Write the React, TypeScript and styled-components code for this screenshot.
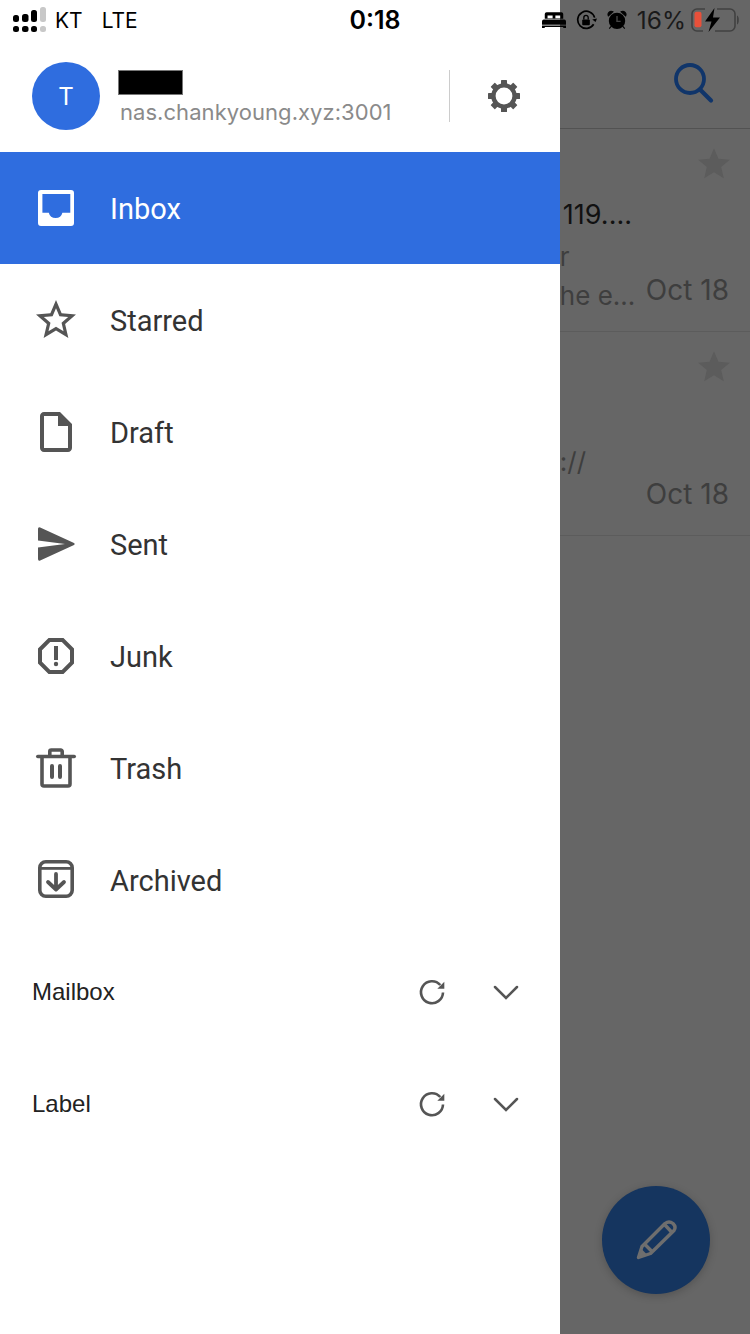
import React from 'react';
import styled, { createGlobalStyle } from 'styled-components';

const GlobalStyle = createGlobalStyle`
  html, body {
    margin: 0;
    padding: 0;
    background: #666;
    font-family: Inter, "Liberation Sans", sans-serif;
  }
  * {
    box-sizing: border-box;
  }
`;

const menuItems = [
  { label: 'Inbox', icon: 'inbox' },
  { label: 'Starred', icon: 'star' },
  { label: 'Draft', icon: 'draft' },
  { label: 'Sent', icon: 'sent' },
  { label: 'Junk', icon: 'junk' },
  { label: 'Trash', icon: 'trash' },
  { label: 'Archived', icon: 'archive' },
];

const MenuIcon = ({ name }: { name: string }) => {
  switch (name) {
    case 'inbox':
      return (
        <svg width="48" height="48" viewBox="0 0 48 48" fill="currentColor">
          <path
            fillRule="evenodd"
            d="M9 6h30a3 3 0 0 1 3 3v30a3 3 0 0 1-3 3H9a3 3 0 0 1-3-3V9a3 3 0 0 1 3-3zM10.4 10v18.7h6.4a7 7 0 0 0 13.6 0h7.9V10z"
          />
        </svg>
      );
    case 'star':
      return (
        <svg width="48" height="48" viewBox="0 0 24 24" fill="currentColor">
          <path d="M22 9.24l-7.19-.62L12 2 9.19 8.63 2 9.24l5.46 4.73L5.82 21 12 17.27 18.18 21l-1.63-7.03L22 9.24zM12 15.4l-3.76 2.27 1-4.28-3.32-2.88 4.38-.38L12 6.1l1.71 4.04 4.38.38-3.32 2.88 1 4.28L12 15.4z" />
        </svg>
      );
    case 'draft':
      return (
        <svg width="48" height="48" viewBox="0 0 24 24" fill="currentColor">
          <path d="M14 2H6c-1.1 0-2 .9-2 2v16c0 1.1.9 2 2 2h12c1.1 0 2-.9 2-2V8l-6-6zm4 18H6V4h7v5h5v11z" />
        </svg>
      );
    case 'sent':
      return (
        <svg width="48" height="48" viewBox="0 0 48 48" fill="currentColor">
          <path d="M8.2 7.4L42 23a1.1 1.1 0 0 1 0 2L8.2 40.6Q6 41.4 6 39V27.6L33 24 6 20.4V9Q6 6.6 8.2 7.4z" />
        </svg>
      );
    case 'junk':
      return (
        <svg width="48" height="48" viewBox="0 0 24 24" fill="currentColor">
          <path d="M15.73 3H8.27L3 8.27v7.46L8.27 21h7.46L21 15.73V8.27L15.73 3zM19 14.9L14.9 19H9.1L5 14.9V9.1L9.1 5h5.8L19 9.1v5.8z" />
          <circle cx="12" cy="16" r="1.1" />
          <path d="M11 7h2v7h-2z" />
        </svg>
      );
    case 'trash':
      return (
        <svg width="48" height="48" viewBox="0 0 48 48" fill="none" stroke="currentColor" strokeWidth="3.6">
          <path d="M5.8 12.5h36.4" strokeLinecap="round" />
          <path d="M10 12.5V40a2 2 0 0 0 2 2h24a2 2 0 0 0 2-2V12.5" />
          <path d="M17.8 12V7.5a1.5 1.5 0 0 1 1.5-1.5h9.4a1.5 1.5 0 0 1 1.5 1.5V12" />
          <path d="M20 22v11M28 22v11" strokeWidth="4" strokeLinecap="round" />
        </svg>
      );
    default:
      return (
        <svg width="48" height="48" viewBox="0 0 48 48" fill="none" stroke="currentColor" strokeWidth="3.6">
          <rect x="7.8" y="5.8" width="32.4" height="34.4" rx="6" />
          <path d="M8 12.4h32" strokeWidth="2.8" />
          <path d="M24 18v15M16 26l8 7.5 8-7.5" strokeWidth="3.8" strokeLinecap="round" strokeLinejoin="round" />
        </svg>
      );
  }
};

const GearIcon = () => (
  <svg width="36" height="36" viewBox="0 0 36 36" fill="#555">
    <circle cx="18" cy="18" r="10.6" fill="none" stroke="#555" strokeWidth="4.4" />
    {[0, 45, 90, 135, 180, 225, 270, 315].map((angle) => (
      <rect key={angle} x="15" y="2" width="6" height="6" rx="0.6" transform={`rotate(${angle} 18 18)`} />
    ))}
  </svg>
);

const RefreshIcon = () => (
  <svg width="32" height="32" viewBox="0 0 32 32" fill="none">
    <path d="M24.3 9A11 11 0 1 0 27 16.5" stroke="#555" strokeWidth="2.6" />
    <path d="M28.3 5.7v7h-7z" fill="#555" />
  </svg>
);

const ChevronIcon = () => (
  <svg width="32" height="32" viewBox="0 0 32 32" fill="none">
    <path d="M5 11l11 11 11-11" stroke="#555" strokeWidth="2.5" strokeLinecap="round" />
  </svg>
);

const SearchIcon = () => (
  <svg width="44" height="44" viewBox="0 0 44 44" fill="none" stroke="#10356a" strokeWidth="3.8">
    <circle cx="18" cy="19" r="14" />
    <path d="M28.5 30L39 40.5" strokeLinecap="round" strokeWidth="4.2" />
  </svg>
);

const StarIcon = () => (
  <svg width="38" height="38" viewBox="0 0 24 24" fill="#5c5c5c">
    <path d="M12 17.27L18.18 21l-1.64-7.03L22 9.24l-7.19-.61L12 2 9.19 8.63 2 9.24l5.46 4.73L5.82 21z" />
  </svg>
);

const PencilIcon = () => (
  <svg width="48" height="48" viewBox="0 0 48 48" fill="none" stroke="#6e6e6e" strokeWidth="3.4" strokeLinejoin="round">
    <path d="M6.5 41.5L10 30.5 33 7.5Q37 4.5 41 7.5 44.5 11 42 14.5L18.5 37.5z" />
    <path d="M12.5 28l8 8M33 9l7 7.5" />
    <path d="M6.5 41.5L9.5 33l5.5 5.5z" fill="#6e6e6e" stroke="none" />
  </svg>
);

const SignalIcon = () => (
  <svg width="34" height="28" viewBox="0 0 34 28">
    <rect x="0" y="9" width="6" height="7" rx="2.5" fill="#000" />
    <rect x="0" y="20" width="6" height="6" rx="2.5" fill="#000" />
    <rect x="9" y="8" width="6.5" height="8" rx="2.5" fill="#000" />
    <rect x="9" y="20" width="6.5" height="6" rx="2.5" fill="#000" />
    <rect x="18" y="4" width="6" height="12" rx="2.5" fill="#000" />
    <rect x="18" y="20" width="6" height="6" rx="2.5" fill="#000" />
    <rect x="27" y="1" width="6" height="15" rx="2.5" fill="#c8c8c8" />
    <rect x="27" y="20" width="6" height="6" rx="2.5" fill="#c8c8c8" />
  </svg>
);

const BedIcon = () => (
  <svg width="24" height="17" viewBox="0 0 26 18" fill="#000">
    <path
      fillRule="evenodd"
      d="M5 0h16a2 2 0 0 1 2 2v5H3V2a2 2 0 0 1 2-2zM6 3.5v3h5.5v-3zM14.5 3.5v3H20v-3z"
    />
    <path d="M2 8h22a2 2 0 0 1 2 2v3.5H0V10a2 2 0 0 1 2-2zM0 14.5h26V17h-3v-1H3v1H0z" />
  </svg>
);

const RotationLockIcon = () => (
  <svg width="21" height="21" viewBox="0 0 22 22" fill="none">
    <path d="M18.5 15A9 9 0 1 1 19.5 8" stroke="#000" strokeWidth="1.8" />
    <path d="M17 10l3.5 2.5L22 9z" fill="#000" />
    <rect x="6.5" y="10" width="8" height="6" rx="1" fill="#000" />
    <path d="M8.2 10V8a2.3 2.3 0 0 1 4.6 0v2" stroke="#000" strokeWidth="1.4" />
  </svg>
);

const AlarmIcon = () => (
  <svg width="20" height="20" viewBox="0 0 22 22" fill="#000">
    <circle cx="11" cy="12" r="9" />
    <path d="M1.5 6.5a3.5 3.5 0 0 1 5-4.5zM20.5 6.500a3.5 3.5 0 0 0-5-4.5zM4.5 18l-2 2.5M17.500 18l2 2.5" stroke="#000" strokeWidth="1.2" />
    <path d="M11 6.5V12.5H15" stroke="#444" strokeWidth="1.6" fill="none" />
  </svg>
);

const BatteryIcon = () => (
  <svg width="48" height="24" viewBox="0 0 48 24" fill="none">
    <path d="M14 1H6a5 5 0 0 0-5 5v12a5 5 0 0 0 5 5h6M26 1h13a5 5 0 0 1 5 5v12a5 5 0 0 1-5 5H24" stroke="#414141" strokeWidth="1.6" />
    <rect x="3.5" y="3.8" width="7" height="15.5" rx="2" fill="#e8503a" />
    <path d="M46 7.5c1.2.6 1.8 2 1.8 4.5s-.6 3.9-1.8 4.5z" fill="#414141" />
    <path d="M23.5 0L14 13.5h6.5L17.5 24 29 9.5h-7z" fill="#000" />
  </svg>
);

export default function App() {
  return (
    <>
      <GlobalStyle />
      <Screen>
        <Drawer>
          <DrawerHeader>
            <Avatar>T</Avatar>
            <AccountInfo>
              <RedactedName />
              <ServerUrl>nas.chankyoung.xyz:3001</ServerUrl>
            </AccountInfo>
            <HeaderDivider />
            <SettingsButton>
              <GearIcon />
            </SettingsButton>
          </DrawerHeader>

          {menuItems.map((item, i) => (
            <MenuItem key={item.label} $active={i === 0}>
              <IconSlot>
                <MenuIcon name={item.icon} />
              </IconSlot>
              <MenuLabel $active={i === 0}>{item.label}</MenuLabel>
            </MenuItem>
          ))}

          {['Mailbox', 'Label'].map((title) => (
            <SectionRow key={title}>
              <SectionTitle>{title}</SectionTitle>
              <SectionActions>
                <RefreshIcon />
                <ChevronIcon />
              </SectionActions>
            </SectionRow>
          ))}
        </Drawer>

        <Backdrop>
          <ListHeader>
            <SearchIcon />
          </ListHeader>
          <MailRow>
            <MailText>
              <Subject>119....</Subject>
              <Preview $top={9}>r</Preview>
              <Preview $top={7}>he e...</Preview>
            </MailText>
            <MailMeta>
              <StarIcon />
              <MailDate>Oct 18</MailDate>
            </MailMeta>
          </MailRow>
          <MailRow>
            <MailText>
              <Subject />
              <Preview $top={11}>://</Preview>
            </MailText>
            <MailMeta>
              <StarIcon />
              <MailDate>Oct 18</MailDate>
            </MailMeta>
          </MailRow>
        </Backdrop>

        <StatusBar>
          <StatusLeft>
            <SignalIcon />
            <Carrier>KT</Carrier>
            <Carrier>LTE</Carrier>
          </StatusLeft>
          <StatusTime>0:18</StatusTime>
          <StatusRight>
            <BedIcon />
            <RotationLockIcon />
            <AlarmIcon />
            <BatteryText>16%</BatteryText>
            <BatteryIcon />
          </StatusRight>
        </StatusBar>

        <ComposeButton>
          <PencilIcon />
        </ComposeButton>
      </Screen>
    </>
  );
}

const Screen = styled.div`
  position: relative;
  display: flex;
  width: 750px;
  height: 1334px;
  overflow: hidden;
`;

const Drawer = styled.div`
  display: flex;
  flex-direction: column;
  flex: 0 0 560px;
  background: #fff;
`;

const DrawerHeader = styled.div`
  display: flex;
  align-items: center;
  height: 152px;
  padding: 40px 2px 0 32px;
`;

const Avatar = styled.div`
  display: flex;
  align-items: center;
  justify-content: center;
  flex: 0 0 68px;
  height: 68px;
  border-radius: 50%;
  background: #2f6ddf;
  color: #fff;
  font-family: Inter, sans-serif;
  font-size: 24px;
`;

const AccountInfo = styled.div`
  display: flex;
  flex: 1;
  flex-direction: column;
  align-items: flex-start;
  padding: 4px 0 0 18px;
`;

const RedactedName = styled.div`
  width: 65px;
  height: 25px;
  background: #000;
  border: 1px solid #777;
`;

const ServerUrl = styled.div`
  margin: 2px 0 0 2px;
  color: #8a8a8a;
  font-family: Inter, sans-serif;
  font-size: 22px;
  letter-spacing: 0.05px;
  line-height: 30px;
  white-space: nowrap;
`;

const HeaderDivider = styled.div`
  flex: 0 0 1px;
  height: 52px;
  background: #ccc;
`;

const SettingsButton = styled.div`
  display: flex;
  align-items: center;
  justify-content: center;
  flex: 0 0 108px;
`;

const MenuItem = styled.div<{ $active: boolean }>`
  display: flex;
  align-items: center;
  height: 112px;
  padding-left: 32px;
  background: ${(props) => (props.$active ? '#2f6ddf' : 'transparent')};
  color: ${(props) => (props.$active ? '#fff' : '#555')};
`;

const IconSlot = styled.div`
  display: flex;
  flex: 0 0 48px;
  height: 48px;
  margin-right: 30px;
`;

const MenuLabel = styled.span<{ $active: boolean }>`
  padding-top: 2px;
  color: ${(props) => (props.$active ? '#fff' : '#333')};
  font-family: Roboto, sans-serif;
  font-size: 29px;
`;

const SectionRow = styled.div`
  display: flex;
  align-items: center;
  justify-content: space-between;
  height: 112px;
  padding: 0 38px 0 32px;
`;

const SectionTitle = styled.span`
  color: #222;
  font-family: "Liberation Sans", sans-serif;
  font-size: 24px;
`;

const SectionActions = styled.div`
  display: flex;
  align-items: center;
  gap: 42px;
`;

const Backdrop = styled.div`
  display: flex;
  flex: 1;
  flex-direction: column;
  min-width: 0;
  background: #666;
  overflow: hidden;
`;

const ListHeader = styled.div`
  display: flex;
  align-items: flex-start;
  justify-content: flex-end;
  height: 128.7px;
  padding: 60px 34px 0 0;
  border-bottom: 1px solid #525252;
`;

const MailRow = styled.div`
  display: flex;
  justify-content: flex-end;
  height: 203.5px;
  padding: 16px 21px 25px 0;
  border-bottom: 1px solid #5c5c5c;
`;

const MailText = styled.div`
  display: flex;
  flex-direction: column;
  align-items: flex-start;
  flex: 0 0 73px;
  min-width: 0;
  padding-top: 53px;
  margin-right: 13px;
  white-space: nowrap;
`;

const Subject = styled.div`
  height: 34px;
  margin-left: 3px;
  color: #111;
  font-family: Inter, sans-serif;
  font-size: 27px;
  line-height: 34px;
`;

const Preview = styled.div<{ $top: number }>`
  margin-top: ${(props) => props.$top}px;
  color: #3e3e3e;
  font-family: Inter, sans-serif;
  font-size: 26px;
  line-height: 32px;
`;

const MailMeta = styled.div`
  display: flex;
  flex: 0 0 83px;
  flex-direction: column;
  align-items: flex-end;
  justify-content: space-between;

  svg {
    margin-right: -4px;
  }
`;

const MailDate = styled.div`
  color: #3e3e3e;
  font-family: Inter, sans-serif;
  font-size: 28px;
  line-height: 32px;
  white-space: nowrap;
`;

const StatusBar = styled.div`
  position: absolute;
  top: 0;
  left: 0;
  display: grid;
  grid-template-columns: 1fr auto 1fr;
  align-items: center;
  width: 750px;
  height: 40px;
  padding: 0 11px;
`;

const StatusLeft = styled.div`
  display: flex;
  align-items: center;
  gap: 19px;
  padding-left: 2px;

  svg {
    margin-right: -11px;
  }
`;

const Carrier = styled.span`
  color: #000;
  font-family: Inter, sans-serif;
  font-size: 21px;
`;

const StatusTime = styled.span`
  color: #000;
  font-family: Inter, sans-serif;
  font-size: 25px;
  font-weight: 600;
`;

const StatusRight = styled.div`
  display: flex;
  align-items: center;
  justify-content: flex-end;
  gap: 10px;
`;

const BatteryText = styled.span`
  margin-right: -5px;
  color: #1a1a1a;
  font-family: Inter, sans-serif;
  font-size: 24.5px;
`;

const ComposeButton = styled.div`
  position: absolute;
  right: 40px;
  bottom: 40px;
  display: flex;
  align-items: center;
  justify-content: center;
  width: 108px;
  height: 108px;
  border-radius: 50%;
  background: #15355f;
  box-shadow: 0 2px 8px rgba(0, 0, 0, 0.2);
`;
